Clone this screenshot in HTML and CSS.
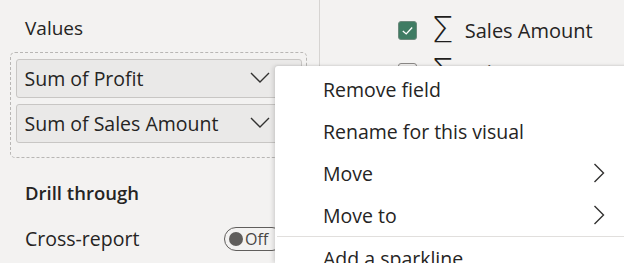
FILE: index.html
```html
<!DOCTYPE html>
<html>
<head>
<meta charset="utf-8">
<link rel="stylesheet" href="styles.css">
</head>
<body>
<div class="layout">
  <section class="left">
    <div class="label">Values</div>
    <div class="well">
      <div class="pill"><span>Sum of Profit</span><svg class="chev" viewBox="0 0 20 12" width="20" height="12"><path d="M1 1 L10 10 L19 1" fill="none" stroke="#323130" stroke-width="1.4"/></svg></div>
      <div class="pill"><span>Sum of Sales Amount</span><svg class="chev" viewBox="0 0 20 12" width="20" height="12"><path d="M1 1 L10 10 L19 1" fill="none" stroke="#323130" stroke-width="1.4"/></svg></div>
    </div>
    <div class="section-title">Drill through</div>
    <div class="row">
      <span class="row-label">Cross-report</span>
      <span class="toggle"><span class="knob"></span><span class="off">Off</span></span>
    </div>
  </section>
  <section class="right">
    <div class="field">
      <span class="check on"><svg viewBox="0 0 20 20" width="20" height="20"><path d="M4.5 10.5 L8.5 14 L15.5 6.5" fill="none" stroke="#fff" stroke-width="1.6"/></svg></span>
      <span class="sigma">&Sigma;</span>
      <span>Sales Amount</span>
    </div>
    <div class="field hidden-row">
      <span class="check"></span>
      <span class="sigma">&Sigma;</span>
      <span>Sales Quantity</span>
    </div>
  </section>
</div>
<div class="menu">
  <div class="item">Remove field</div>
  <div class="item">Rename for this visual</div>
  <div class="item">Move<svg class="arrow" viewBox="0 0 12 20" width="12" height="20"><path d="M1.5 1 L10.5 10 L1.5 19" fill="none" stroke="#323130" stroke-width="1.4"/></svg></div>
  <div class="item">Move to<svg class="arrow" viewBox="0 0 12 20" width="12" height="20"><path d="M1.5 1 L10.5 10 L1.5 19" fill="none" stroke="#323130" stroke-width="1.4"/></svg></div>
  <div class="divider"></div>
  <div class="item">Add a sparkline</div>
</div>
</body>
</html>
```
FILE: styles.css
```css
html, body {
  margin: 0;
  padding: 0;
}
body {
  width: 624px;
  height: 263px;
  overflow: hidden;
  background: #f3f2f1;
  font-family: "Open Sans", "Noto Sans", sans-serif;
  color: #252423;
  position: relative;
}
.layout {
  display: flex;
  height: 263px;
  overflow: hidden;
}
.left {
  width: 320px;
  flex: none;
  box-sizing: border-box;
  padding: 0 12px 0 10px;
  border-right: 1px solid #d6d4d2;
}
.label {
  font-size: 19px;
  line-height: 24px;
  margin: 16px 0 0 15px;
}
.well {
  margin-top: 12px;
  border: 1.5px dashed #b8b6b4;
  border-radius: 5px;
  padding: 5.5px 4px 14px 4.5px;
  display: flex;
  flex-direction: column;
  gap: 6px;
}
.pill {
  height: 39px;
  box-sizing: border-box;
  border: 1px solid #c8c6c4;
  border-radius: 3px;
  background: #eae9e8;
  display: flex;
  align-items: center;
  justify-content: space-between;
  padding: 0 31px 0 8px;
  font-size: 19.5px;
}
.chev {
  display: block;
}
.section-title {
  font-size: 18.5px;
  font-weight: 600;
  margin: 23px 0 0 15px;
  line-height: 24px;
}
.row {
  display: flex;
  align-items: center;
  margin: 21px 0 0 15px;
  font-size: 19.5px;
  line-height: 26px;
}
.row-label {
  width: 199px;
}
.toggle {
  flex: none;
  display: flex;
  align-items: center;
  width: 60px;
  height: 24px;
  box-sizing: border-box;
  border: 1.5px solid #605e5c;
  border-radius: 12px;
  padding-left: 4px;
  gap: 2px;
}
.knob {
  width: 14px;
  height: 14px;
  border-radius: 50%;
  background: #605e5c;
}
.off {
  font-size: 16px;
  color: #484644;
  line-height: 18px;
}
.right {
  flex: 1;
  padding: 19px 0 0 78px;
}
.field {
  display: flex;
  align-items: center;
  height: 22px;
  font-size: 20px;
  margin-bottom: 20px;
  white-space: nowrap;
}
.check {
  width: 19px;
  height: 19px;
  box-sizing: border-box;
  border: 1.5px solid #8a8886;
  border-radius: 3px;
  display: inline-flex;
  align-items: center;
  justify-content: center;
  flex: none;
}
.check.on {
  background: #3f7c63;
  border-color: #6d8a7d;
}
.check svg {
  width: 17px;
  height: 17px;
}
.sigma {
  font-family: "DejaVu Sans", sans-serif;
  font-size: 36px;
  margin: 0 11px 0 14px;
  font-weight: 200;
  line-height: 22px;
  color: #1f1e1d;
}
.hidden-row {
  color: #605e5c;
}
.menu {
  position: absolute;
  left: 275px;
  top: 66px;
  width: 380px;
  height: 197px;
  overflow: hidden;
  background: #ffffff;
  border-top-left-radius: 3px;
  box-shadow: -2px 0 4px rgba(0, 0, 0, 0.12), 0 -1px 2px rgba(0, 0, 0, 0.06);
  padding-top: 2px;
  box-sizing: border-box;
}
.item {
  height: 42px;
  display: flex;
  align-items: center;
  padding-left: 48px;
  padding-right: 50px;
  font-size: 19.5px;
  justify-content: space-between;
  color: #252423;
  white-space: nowrap;
}
.arrow {
  display: block;
}
.divider {
  height: 1px;
  background: #e1dfdd;
  margin: 0 0 0 2px;
}
```
